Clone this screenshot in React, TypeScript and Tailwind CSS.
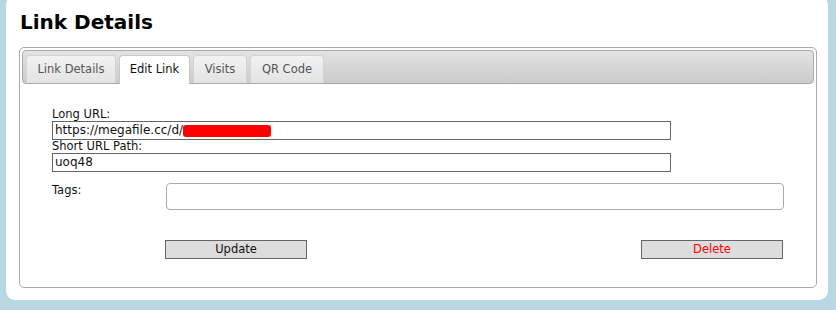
const tabs = [
  { label: 'Link Details', width: 'w-[90px]' },
  { label: 'Edit Link', width: 'w-[71px]', active: true },
  { label: 'Visits', width: 'w-[54px]' },
  { label: 'QR Code', width: 'w-[74px]' },
];

export default function App() {
  return (
    <div className="h-[310px] w-[836px] overflow-hidden bg-[#b7d7e3] pl-[6px] pr-[8px] font-['DejaVu_Sans',Verdana,sans-serif]">
      <div className="-mt-[4px] h-[304px] rounded-[9px] bg-white pl-[13px] pr-[11px] pt-[14px]">
        <h1 className="ml-px text-[20px] font-bold leading-[24px] text-black">
          Link Details
        </h1>

        <div className="mt-[13px] h-[241px] w-[798px] rounded-[5px] border border-[#aaaaaa] p-[2px]">
          <div className="flex h-[34px] gap-[3px] rounded-[4px] border border-[#aaaaaa] bg-gradient-to-b from-[#e3e3e3] to-[#cbcbcb] pl-[3px] pt-[4px]">
            {tabs.map((tab) => (
              <div
                key={tab.label}
                className={`${tab.width} flex items-center justify-center rounded-t-[4px] border border-b-0 text-[11.5px] ${
                  tab.active
                    ? 'z-10 h-[29px] border-[#c8c8c8] bg-white text-[#111111]'
                    : 'h-[28px] border-[#d3d3d3] bg-gradient-to-b from-[#f2f2f2] to-[#e3e3e3] text-[#555555]'
                }`}
              >
                {tab.label}
              </div>
            ))}
          </div>

          <div className="pl-[30px] pt-[24px] text-[11.5px] text-[#111111]">
            <div className="leading-[13px]">Long URL:</div>
            <div className="flex h-[19px] w-[619px] items-center border border-[#666666] px-[2px] text-[12px] leading-[17px]">
              https://megafile.cc/d/
              <span className="inline-block h-[12px] w-[88px] rounded-[3px] bg-[#ff0000]" />
            </div>
            <div className="leading-[13px]">Short URL Path:</div>
            <div className="flex h-[19px] w-[619px] items-center border border-[#666666] px-[2px] text-[12px] leading-[17px]">
              uoq48
            </div>

            <div className="mt-[11px] flex">
              <div className="w-[114px] pt-px leading-[13px]">Tags:</div>
              <div className="h-[27px] w-[618px] rounded-[4px] border border-[#aaaaaa]" />
            </div>

            <div className="mt-[30px] flex">
              <button className="ml-[113px] h-[19px] w-[142px] border border-[#666666] bg-[#dddddd] text-[11.5px] leading-[17px] text-[#111111]">
                Update
              </button>
              <button className="ml-[334px] h-[19px] w-[142px] border border-[#666666] bg-[#dddddd] text-[11.5px] leading-[17px] text-[#ff0000]">
                Delete
              </button>
            </div>
          </div>
        </div>
      </div>
    </div>
  );
}
